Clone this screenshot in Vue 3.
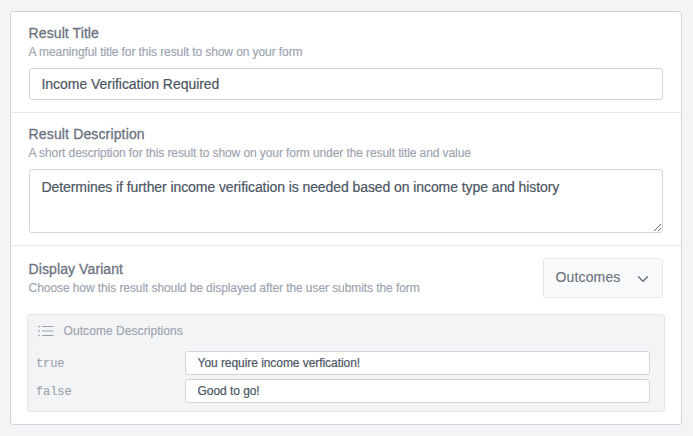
<script setup>
import { ref } from 'vue'

const title = ref('Income Verification Required')
const description = ref('Determines if further income verification is needed based on income type and history')
const outcomes = ref([
  { key: 'true', text: 'You require income verfication!' },
  { key: 'false', text: 'Good to go!' },
])
</script>

<template>
  <main class="page">
    <div class="card">
      <section class="section section-title">
        <label class="label" for="title">Result Title</label>
        <p class="hint">A meaningful title for this result to show on your form</p>
        <input id="title" v-model="title" class="field title-field" type="text" />
      </section>

      <section class="section section-description">
        <label class="label label-description" for="description">Result Description</label>
        <p class="hint">A short description for this result to show on your form under the result title and value</p>
        <textarea id="description" v-model="description" class="field description-field"></textarea>
      </section>

      <section class="section section-variant">
        <div class="variant-head">
          <div class="variant-text">
            <div class="label">Display Variant</div>
            <p class="hint hint-variant">Choose how this result should be displayed after the user submits the form</p>
          </div>
          <button class="select" type="button">
            <span>Outcomes</span>
            <svg class="chevron" viewBox="0 0 12 8" fill="none" stroke="currentColor" stroke-width="1.5" stroke-linecap="round" stroke-linejoin="round">
              <path d="M1.5 1.7 6 6.2l4.500-4.500" />
            </svg>
          </button>
        </div>

        <div class="outcomes">
          <div class="outcomes-head">
            <svg class="list-icon" viewBox="0 0 16 12" stroke="currentColor" stroke-width="1">
              <path d="M4 1.500h11.500M4 6h11.500M4 10.500h11.500" />
              <path stroke-width="1.500" d="M.3 1.500h1.500M.3 6h1.500M.3 10.500h1.500" />
            </svg>
            <span>Outcome Descriptions</span>
          </div>
          <div v-for="outcome in outcomes" :key="outcome.key" class="outcome">
            <code class="outcome-key">{{ outcome.key }}</code>
            <input v-model="outcome.text" class="field outcome-field" type="text" />
          </div>
        </div>
      </section>
    </div>
  </main>
</template>

<style>
body {
  background: #f3f4f6;
}
</style>

<style scoped>
.page,
.page * {
  box-sizing: border-box;
}
.page {
  height: 436px;
  padding: 11px 11px 11px 10px;
  background: #f3f4f6;
  font-family: 'Liberation Sans', Arial, sans-serif;
}
.card {
  height: 414px;
  border: 1px solid #d1d5db;
  border-radius: 3px;
  background: #fff;
}
.section {
  padding: 0 18px;
}
.section-title {
  height: 101px;
  padding-top: 12px;
  border-bottom: 1px solid #e5e7eb;
}
.section-description {
  height: 133px;
  padding-top: 12px;
  border-bottom: 1px solid #e5e7eb;
}
.section-variant {
  padding: 12px 16px 0;
}
.label {
  display: block;
  height: 19px;
  margin-left: -0.4px;
  font-size: 14px;
  line-height: 18px;
  letter-spacing: 0.09px;
  color: #6b7280;
  -webkit-text-stroke: 0.3px currentColor;
}
.label-description {
  letter-spacing: 0.14px;
}
.hint {
  margin: 0 0 0 -0.4px;
  height: 18px;
  font-size: 12px;
  line-height: 18px;
  color: #9ca3af;
  white-space: nowrap;
  letter-spacing: -0.09px;
  -webkit-text-stroke: 0.15px currentColor;
}
.field {
  display: block;
  width: 100%;
  margin: 0;
  border: 1px solid #d1d5db;
  border-radius: 3px;
  background: #fff;
  color: #4b5563;
  font-family: inherit;
  font-size: 14px;
  outline: none;
  -webkit-text-stroke: 0.2px currentColor;
}
.title-field {
  height: 32px;
  margin-top: 7px;
  padding: 0 11.500px;
  letter-spacing: -0.04px;
}
.description-field {
  height: 64px;
  margin-top: 7px;
  padding: 7px 11.500px;
  line-height: 20px;
  letter-spacing: -0.08px;
  resize: vertical;
}
.variant-head {
  display: flex;
  justify-content: space-between;
  padding: 0 2px;
}
.variant-text {
  padding-top: 2px;
}
.hint-variant {
  letter-spacing: -0.08px;
}
.select {
  display: flex;
  align-items: center;
  justify-content: space-between;
  width: 120px;
  height: 40px;
  padding: 0 13px 2px 11.500px;
  border: 1px solid #e5e7eb;
  border-radius: 3px;
  background: #f9fafb;
  color: #6b7280;
  font-family: inherit;
  font-size: 14px;
  letter-spacing: 0.15px;
  -webkit-text-stroke: 0.15px currentColor;
}
.chevron {
  width: 12px;
  height: 8px;
  margin-top: 3px;
}
.outcomes {
  height: 98px;
  margin-top: 16px;
  padding: 6px 14px 0 8px;
  border: 1px solid #e5e7eb;
  border-radius: 3px;
  background: #f3f4f6;
}
.outcomes-head {
  display: flex;
  align-items: center;
  gap: 9.600px;
  height: 20px;
  margin-bottom: 10px;
  padding-left: 2px;
  color: #9ca3af;
  font-size: 12px;
  letter-spacing: 0.06px;
  -webkit-text-stroke: 0.15px currentColor;
}
.list-icon {
  width: 16px;
  height: 12px;
}
.outcome {
  display: grid;
  grid-template-columns: 149px 1fr;
  align-items: center;
  height: 24px;
  margin-bottom: 4px;
}
.outcome-key {
  padding-top: 2px;
  color: #9ca3af;
  font-family: 'Liberation Mono', monospace;
  font-size: 12px;
  letter-spacing: -0.08px;
  -webkit-text-stroke: 0.15px currentColor;
}
.outcome-field {
  height: 24px;
  padding: 0 11.600px;
  font-size: 12px;
  letter-spacing: -0.06px;
}
</style>
